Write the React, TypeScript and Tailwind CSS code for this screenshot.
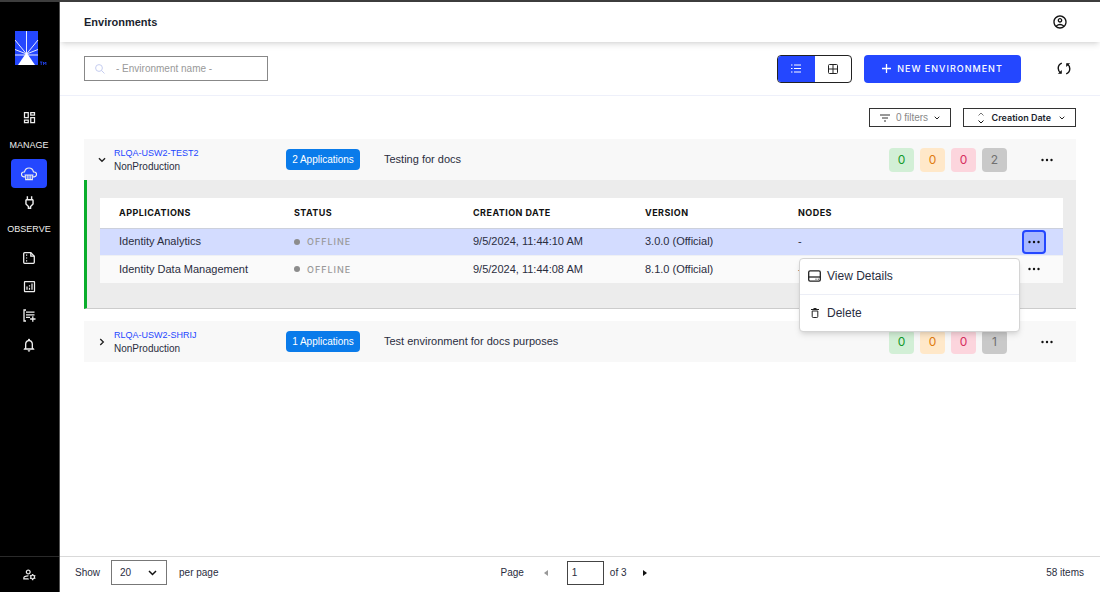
import { useState } from "react"
import type { ReactNode } from "react"
import {
  MdNotificationsNone,
  MdOutlineAccountCircle,
  MdOutlineAnalytics,
  MdOutlineDashboard,
  MdOutlineManageAccounts,
  MdOutlinePower,
} from "react-icons/md"

type Application = {
  name: string
  status: string
  created: string
  version: string
  nodes: string
}
type Environment = {
  name: string
  kind: string
  description: string
  count: number
  health: [number, number, number, number]
  applications: Application[]
}

const environments: Environment[] = [
  {
    name: "RLQA-USW2-TEST2",
    kind: "NonProduction",
    description: "Testing for docs",
    count: 2,
    health: [0, 0, 0, 2],
    applications: [
      {
        name: "Identity Analytics",
        status: "OFFLINE",
        created: "9/5/2024, 11:44:10 AM",
        version: "3.0.0 (Official)",
        nodes: "-",
      },
      {
        name: "Identity Data Management",
        status: "OFFLINE",
        created: "9/5/2024, 11:44:08 AM",
        version: "8.1.0 (Official)",
        nodes: "-",
      },
    ],
  },
  {
    name: "RLQA-USW2-SHRIJ",
    kind: "NonProduction",
    description: "Test environment for docs purposes",
    count: 1,
    health: [0, 0, 0, 1],
    applications: [],
  },
]

// healthy, warning, critical, offline
const healthStyles = [
  "bg-[#d2efd6] text-[#12992b]",
  "bg-[#ffe8c9] text-[#e07a10]",
  "bg-[#fcd5dd] text-[#d62f5f]",
  "bg-[#c9c9c9] text-[#707070]",
]

const Logo = () => (
  <svg width="34" height="34" viewBox="0 0 34 34" aria-label="Home">
    <rect width="23" height="34" fill="#2447ff" />
    <g stroke="#e6eaff" strokeWidth="1">
      <path d="M11.500 23V0M11.500 23L0 9M11.500 23L23 9M11.500 23L0 18.500M11.500 23L23 18.500M0 24h23" />
    </g>
    <path d="M11.500 21.500L20 34H3z" fill="#fff" />
    <path d="M25 31h2.500M26.250 31v3M28.500 34v-3l1.200 1.700 1.200-1.700v3" stroke="#2447ff" strokeWidth=".8" fill="none" />
  </svg>
)

const CloudIcon = () => (
  <svg width="16" height="14" viewBox="0 0 16 14" fill="none" stroke="currentColor" strokeWidth="1.200">
    <path d="M4 9.800H3a2.400 2.400 0 0 1-.2-4.800h.7C4 2.500 5.700 1 8 1s4 1.500 4.500 4h.7A2.400 2.400 0 0 1 13 9.800h-1" />
    <path d="M3.500 8h9M4.700 8v4.600h6.600V8M6.900 8v4.600M9.100 8v4.600" />
  </svg>
)

const ReportIcon = () => (
  <svg width="12" height="12" viewBox="0 0 12 12" fill="none" stroke="currentColor" strokeWidth="1.300">
    <path d="M1.700.7h6.100l3.500 3.500v6.100a1 1 0 0 1-1 1H1.700a1 1 0 0 1-1-1V1.700a1 1 0 0 1 1-1z" />
    <path d="M7.800.7v3.500h3.500" />
    <path d="M3 3.200h1.200M3 6h1.200M3 8.800h1.200" strokeWidth="1.200" />
  </svg>
)

const ListAddIcon = () => (
  <svg width="13" height="13" viewBox="0 0 13 13" fill="none" stroke="currentColor" strokeWidth="1.300">
    <path d="M3 1H1v11h2M3 3.200h8.500M3 5.800h8.500M3 8.400h4M9.800 7.300v5.400M7.100 10h5.400" />
  </svg>
)

const SearchIcon = () => (
  <svg width="10" height="10" viewBox="0 0 10 10" fill="none" stroke="#c5cdf0" strokeWidth="1" className="shrink-0">
    <circle cx="4" cy="4" r="3.400" />
    <path d="M6.500 6.500L9.500 9.500" />
  </svg>
)

const ListIcon = () => (
  <svg width="10" height="9" viewBox="0 0 10 9" stroke="currentColor" strokeWidth="1">
    <path d="M0 1h1.500M3 1h7M0 4.500h1.500M3 4.500h7M0 8h1.500M3 8h7" />
  </svg>
)

const GridIcon = () => (
  <svg width="10" height="10" viewBox="0 0 10 10" fill="none" stroke="currentColor" strokeWidth="1">
    <rect x=".5" y=".5" width="9" height="9" rx="1" />
    <path d="M5 .5v9M.5 5h9" />
  </svg>
)

const PlusIcon = () => (
  <svg width="9" height="9" viewBox="0 0 9 9" stroke="currentColor" strokeWidth="1.300">
    <path d="M4.500 0v9M0 4.500h9" />
  </svg>
)

const RefreshIcon = () => (
  <svg width="14" height="13" viewBox="0 0 14 13" fill="none" stroke="#111" strokeWidth="1.400">
    <path d="M4.800 1.200C2.500 2.200 1.200 4 1.200 6.300c0 2 .9 3.500 2.500 4.700" />
    <path d="M.8 11.700h4V8z" fill="#111" stroke="none" />
    <path d="M9.200 11.800c2.300-1 3.600-2.800 3.600-5.100 0-2-.9-3.500-2.500-4.700" />
    <path d="M13.200 1.300h-4V5z" fill="#111" stroke="none" />
  </svg>
)

const FilterIcon = () => (
  <svg width="10" height="8" viewBox="0 0 10 8" stroke="#333" strokeWidth="1">
    <path d="M0 1h10M2 4h6M4 7h2" />
  </svg>
)

const SortIcon = () => (
  <svg width="6" height="12" viewBox="0 0 6 12" fill="none" strokeWidth="1">
    <path d="M.5 3.500L3 1l2.500 2.500" stroke="#777" />
    <path d="M.5 8.500L3 11l2.500-2.500" stroke="#111" />
  </svg>
)

const Chevron = ({ size = 6, className }: { size?: number; className?: string }) => (
  <svg
    width={size}
    height={size}
    viewBox="0 0 6 6"
    fill="none"
    stroke="#222"
    className={className}
  >
    <path d="M.7 1.700L3 4l2.300-2.300" />
  </svg>
)

const DotsIcon = () => (
  <svg width="12" height="4" viewBox="0 0 12 4" fill="#111">
    <circle cx="1.500" cy="2" r="1.200" />
    <circle cx="6" cy="2" r="1.200" />
    <circle cx="10.500" cy="2" r="1.200" />
  </svg>
)

const DriveIcon = () => (
  <svg width="13" height="12" viewBox="0 0 13 12" fill="none" stroke="#222" strokeWidth="1.300">
    <rect x=".7" y=".8" width="11.600" height="10.400" rx="1.400" />
    <path d="M.6 7h11.800" />
    <path d="M7.500 9.200h1M9.800 9.200h1" strokeWidth="1" />
  </svg>
)

const TrashIcon = () => (
  <svg width="8" height="10" viewBox="0 0 8 10" fill="none" stroke="#222" strokeWidth="1">
    <path d="M0 1.500h8M2.500.5h3" />
    <path d="M1.200 3h5.600v5.500a1 1 0 0 1-1 1H2.200a1 1 0 0 1-1-1z" />
  </svg>
)

const NavItem = ({ label, active, children }: { label: string; active?: boolean; children: ReactNode }) => (
  <a
    href="#"
    aria-label={label}
    className={
      active
        ? "flex h-[29px] w-9 items-center justify-center rounded-sm bg-[#2447ff]"
        : "flex h-[29px] w-9 items-center justify-center"
    }
  >
    {children}
  </a>
)

const Sidebar = () => (
  <nav className="flex w-[60px] shrink-0 flex-col border-r border-[#555] bg-black text-[#eee]">
    <a href="#" className="mt-[29px] ml-[15px]">
      <Logo />
    </a>
    <div className="mt-[38px] flex flex-col items-center pr-px">
      <NavItem label="Dashboard">
        <MdOutlineDashboard size={15} />
      </NavItem>
      <span className="flex h-[27px] items-center text-[9px]">MANAGE</span>
      <NavItem label="Environments" active>
        <CloudIcon />
      </NavItem>
      <NavItem label="Connections">
        <MdOutlinePower size={17} />
      </NavItem>
      <span className="flex h-[26px] items-center text-[9px]">OBSERVE</span>
      <NavItem label="Reports">
        <ReportIcon />
      </NavItem>
      <NavItem label="Analytics">
        <MdOutlineAnalytics size={15} />
      </NavItem>
      <NavItem label="Logs">
        <ListAddIcon />
      </NavItem>
      <NavItem label="Alerts">
        <MdNotificationsNone size={16} />
      </NavItem>
    </div>
    <div className="mt-auto flex h-9 items-center justify-center border-t border-[#2a2a2a]">
      <a href="#" aria-label="Account settings">
        <MdOutlineManageAccounts size={15} />
      </a>
    </div>
  </nav>
)

const Toolbar = () => (
  <div className="flex h-[54px] items-center justify-between border-b border-[#eef0fa] px-6">
    <label className="flex h-[25px] w-[184px] items-center border border-[#888] bg-white pl-[10px]">
      <SearchIcon />
      <input
        type="text"
        aria-label="Environment name"
        placeholder="- Environment name -"
        className="ml-2 w-full bg-transparent pl-[3px] text-[10px] outline-none placeholder:text-[#999]"
      />
    </label>
    <div className="flex items-center">
      <div className="flex h-7 w-[75px] overflow-hidden rounded border border-[#222]">
        <button type="button" aria-label="List view" className="flex flex-1 items-center justify-center bg-[#2447ff] text-white">
          <ListIcon />
        </button>
        <button type="button" aria-label="Grid view" className="flex flex-1 items-center justify-center text-[#222]">
          <GridIcon />
        </button>
      </div>
      <button
        type="button"
        className="ml-3 flex h-7 w-[157px] items-center justify-center gap-[6px] rounded-sm bg-[#2447ff] font-['Inter',sans-serif] text-[9px] font-medium tracking-[1px] text-white"
      >
        <PlusIcon />
        NEW ENVIRONMENT
      </button>
      <button type="button" aria-label="Refresh" className="ml-[30px] flex w-[25px] justify-center">
        <RefreshIcon />
      </button>
    </div>
  </div>
)

const RowMenu = () => (
  <div
    role="menu"
    className="absolute top-7 right-[26px] z-10 w-[221px] rounded border border-[#d4d4d4] bg-white text-left text-xs text-[#2a2d3e] shadow-md"
  >
    <button type="button" role="menuitem" className="flex h-9 w-full items-center gap-[6px] border-b border-[#eceef6] px-2">
      <DriveIcon />
      View Details
    </button>
    <button type="button" role="menuitem" className="flex h-9 w-full items-center gap-2 pl-[11px]">
      <TrashIcon />
      Delete
    </button>
  </div>
)

const ApplicationTable = ({ applications }: { applications: Application[] }) => {
  const [openRow, setOpenRow] = useState<number | null>(0)
  return (
    <table className="w-full table-fixed border-collapse text-left text-[11px] text-[#2a2d3e]">
      <thead>
        <tr className="h-[30px] border-b border-[#ccd0dc] bg-white font-['Inter',sans-serif] text-[9px] text-[#111]">
          <th className="w-[194px] pl-[19px] font-bold tracking-wider">APPLICATIONS</th>
          <th className="w-[179px] font-bold tracking-wider">STATUS</th>
          <th className="w-[172px] font-bold tracking-wider">CREATION DATE</th>
          <th className="w-[153px] font-bold tracking-wider">VERSION</th>
          <th className="font-bold tracking-wider">NODES</th>
          <th className="w-[41px]" aria-label="Actions" />
        </tr>
      </thead>
      <tbody>
        {applications.map((app, i) => {
          const open = openRow === i
          return (
            <tr
              key={app.name}
              className={open ? "h-[27px] bg-[#d3dcff]" : "h-[28px] border-t border-[#eef0f4] bg-[#fafafa]"}
            >
              <td className="pl-[19px]">{app.name}</td>
              <td>
                <span className="flex items-center gap-[7px] font-['Inter',sans-serif] text-[9px] font-medium tracking-[1px] text-[#999]">
                  <span className="h-[6px] w-[6px] rounded-full bg-[#8c8c8c]" />
                  {app.status}
                </span>
              </td>
              <td>{app.created}</td>
              <td>{app.version}</td>
              <td>{app.nodes}</td>
              <td>
                <div className="relative w-6">
                  <button
                    type="button"
                    aria-label={`Actions for ${app.name}`}
                    onClick={() => setOpenRow(open ? null : i)}
                    className={
                      open
                        ? "flex h-6 w-6 items-center justify-center rounded-sm border-2 border-[#2447ff] bg-[#a8b8ff]"
                        : "flex h-6 w-6 items-center justify-center"
                    }
                  >
                    <DotsIcon />
                  </button>
                  {open ? <RowMenu /> : null}
                </div>
              </td>
            </tr>
          )
        })}
      </tbody>
    </table>
  )
}

const EnvironmentRow = ({ env, defaultOpen }: { env: Environment; defaultOpen?: boolean }) => {
  const [open, setOpen] = useState(!!defaultOpen)
  return (
    <section>
      <div className="flex h-[41px] items-center bg-[#f8f8f8] text-[#2a2d3e]">
        <button
          type="button"
          aria-label={`Toggle ${env.name}`}
          onClick={() => setOpen(!open)}
          className="ml-[10px] flex w-[20px] shrink-0 items-center pl-1"
        >
          <Chevron size={8} className={open ? undefined : "-rotate-90"} />
        </button>
        <div className="w-[172px] shrink-0 text-[10px] leading-[14px]">
          <a href="#" className="block text-[9px] leading-[14px] text-[#2447ff]">
            {env.name}
          </a>
          {env.kind}
        </div>
        <button type="button" className="h-[21px] w-[74px] shrink-0 rounded-sm bg-[#0a7bea] text-[10px] text-white">
          {env.count} Applications
        </button>
        <p className="ml-6 flex-1 text-[11px]">{env.description}</p>
        <div className="flex gap-[6px]">
          {env.health.map((n, i) => (
            <span
              key={i}
              className={`flex h-6 w-[25px] items-center justify-center rounded font-['Inter',sans-serif] text-xs ${healthStyles[i]}`}
            >
              {n}
            </span>
          ))}
        </div>
        <button type="button" aria-label={`Actions for ${env.name}`} className="mr-[17px] ml-[28px] flex h-6 w-6 items-center justify-center">
          <DotsIcon />
        </button>
      </div>
      {open ? (
        <div className="border-b border-l-3 border-[#ccc] border-l-[#0aad2c] bg-[#ececec] pt-[18px] pr-[13px] pb-[25px] pl-[13px]">
          <ApplicationTable applications={env.applications} />
        </div>
      ) : null}
    </section>
  )
}

const Pagination = () => (
  <footer className="grid h-10 grid-cols-3 items-center border-t border-[#d9d9d9] pr-4 pb-2 pl-[15px] text-[10px] text-[#2a2d3e]">
    <div className="flex items-center">
      <label htmlFor="page-size">Show</label>
      <div className="relative ml-[11px]">
        <select id="page-size" defaultValue="20" className="h-[25px] w-14 appearance-none border border-[#777] bg-white pl-2">
          <option>20</option>
          <option>50</option>
          <option>100</option>
        </select>
        <svg
          width="9"
          height="6"
          viewBox="0 0 9 6"
          fill="none"
          stroke="#111"
          strokeWidth="1.500"
          className="pointer-events-none absolute top-[10px] right-[10px]"
        >
          <path d="M1 1l3.500 3.500L8 1" />
        </svg>
      </div>
      <span className="ml-3">per page</span>
    </div>
    <div className="flex items-center justify-center pr-2">
      <label htmlFor="page">Page</label>
      <button type="button" aria-label="Previous page" className="ml-4 flex w-3 justify-center">
        <svg width="4" height="6" viewBox="0 0 4 6" fill="#999">
          <path d="M4 0v6L0 3z" />
        </svg>
      </button>
      <input id="page" type="text" defaultValue="1" className="ml-[15px] h-6 w-[37px] border border-[#444] pl-1" />
      <span className="ml-[6px]">of 3</span>
      <button type="button" aria-label="Next page" className="ml-3 flex w-3 justify-center">
        <svg width="4" height="6" viewBox="0 0 4 6" fill="#111">
          <path d="M0 0v6l4-3z" />
        </svg>
      </button>
    </div>
    <span className="text-right">58 items</span>
  </footer>
)

const App = () => (
  <div className="flex min-h-screen border-t-2 border-[#3d3d3d] bg-white font-['Liberation_Sans',sans-serif]">
    <div className="flex pb-1">
      <Sidebar />
    </div>
    <div className="flex min-w-0 flex-1 flex-col">
      <header className="flex h-10 items-center justify-between pr-8 pl-6 shadow-md">
        <h1 className="text-[11px] font-bold text-[#1b1f2e]">Environments</h1>
        <button type="button" aria-label="Account">
          <MdOutlineAccountCircle size={16} color="#111" />
        </button>
      </header>
      <Toolbar />
      <main className="flex-1 px-6 pt-3 pb-6">
        <div className="flex justify-end gap-3">
          <button type="button" className="flex h-[19px] w-[82px] items-center justify-center gap-[6px] border border-[#333] text-[10px] text-[#888]">
            <FilterIcon />
            0 filters
            <Chevron />
          </button>
          <button
            type="button"
            className="flex h-[19px] w-[113px] items-center justify-end gap-2 border border-[#333] pr-[10px] text-[10px] text-[#1b1f2e]"
          >
            <SortIcon />
            <span className="font-['Inter',sans-serif] text-[9px] font-semibold">Creation Date</span>
            <Chevron />
          </button>
        </div>
        <div className="mt-3 flex flex-col gap-3">
          {environments.map((env, i) => (
            <EnvironmentRow key={env.name} env={env} defaultOpen={i === 0} />
          ))}
        </div>
      </main>
      <Pagination />
    </div>
  </div>
)

export default App
